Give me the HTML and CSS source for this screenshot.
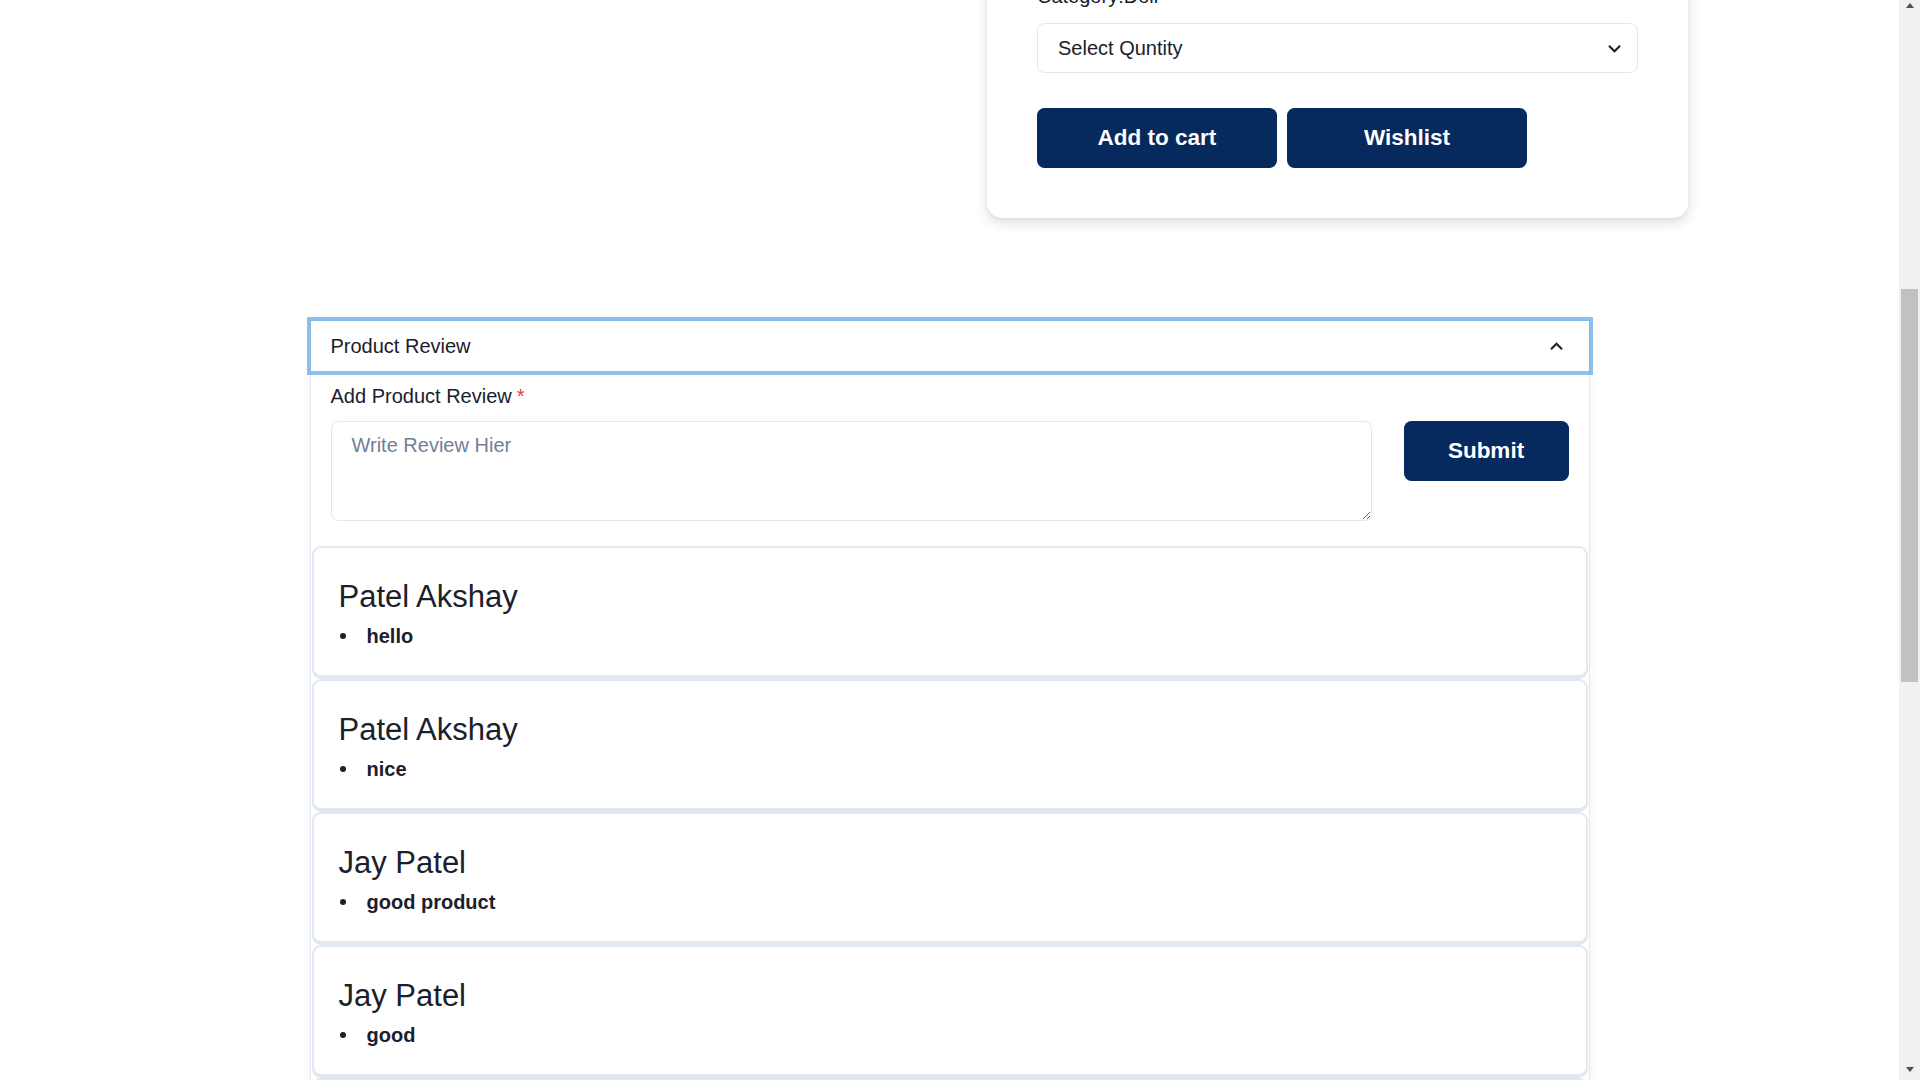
FILE: index.html
```html
<!DOCTYPE html>
<html lang="en">
<head>
<meta charset="utf-8">
<title>Product Review</title>
<link rel="stylesheet" href="styles.css">
</head>
<body>
<div class="screen">
  <main class="page">
    <section class="product">
      <div class="product-media"></div>
      <div class="product-card">
        <p class="category">Category:Doll</p>
        <div class="select">
          <span>Select Quntity</span>
          <svg class="chev" viewBox="0 0 24 24" aria-hidden="true"><path d="M16.59 8.59L12 13.17 7.41 8.59 6 10l6 6 6-6z"/></svg>
        </div>
        <div class="actions">
          <button class="btn">Add to cart</button>
          <button class="btn">Wishlist</button>
        </div>
      </div>
    </section>

    <section class="accordion">
      <div class="acc-item">
        <button class="acc-button">
          <span>Product Review</span>
          <svg class="chev" viewBox="0 0 24 24" aria-hidden="true"><path d="M12 8l-6 6 1.41 1.41L12 10.83l4.59 4.58L18 14z"/></svg>
        </button>
        <div class="acc-panel">
          <label class="label" for="review">Add Product Review<span class="req">*</span></label>
          <div class="review-form">
            <textarea id="review" class="textarea" placeholder="Write Review Hier"></textarea>
            <button class="btn submit">Submit</button>
          </div>
        </div>
        <div class="reviews">
          <div class="review">
            <p class="review-name">Patel Akshay</p>
            <ul class="review-list"><li>hello</li></ul>
          </div>
          <div class="review">
            <p class="review-name">Patel Akshay</p>
            <ul class="review-list"><li>nice</li></ul>
          </div>
          <div class="review">
            <p class="review-name">Jay Patel</p>
            <ul class="review-list"><li>good product</li></ul>
          </div>
          <div class="review">
            <p class="review-name">Jay Patel</p>
            <ul class="review-list"><li>good</li></ul>
          </div>
          <div class="review review-empty"></div>
        </div>
      </div>
    </section>
  </main>
  <aside class="scrollbar" aria-hidden="true">
    <div class="sb-up"><span class="tri-up"></span></div>
    <div class="sb-thumb"></div>
    <div class="sb-fill"></div>
    <div class="sb-down"><span class="tri-down"></span></div>
  </aside>
</div>
</body>
</html>
```

FILE: styles.css
```css
* { box-sizing: border-box; }

html, body {
  margin: 0;
  padding: 0;
  background: #ffffff;
}

body {
  font-family: "Liberation Sans", Arial, sans-serif;
  color: #1a202c;
  overflow: hidden;
}

.screen {
  display: flex;
  height: 1080px;
  overflow: hidden;
}

.page {
  flex: 1;
  min-width: 0;
  overflow: hidden;
}

/* ---------- product section ---------- */
.product {
  width: 1477px;
  margin: -69px auto 0;
  display: grid;
  grid-template-columns: 1fr 701px;
}

.product-card {
  background: #fff;
  border-radius: 15px;
  padding: 50px;
  box-shadow: 0 5px 14px rgba(0, 0, 0, 0.12), 0 2px 5px rgba(0, 0, 0, 0.05);
}

.category {
  margin: 0;
  font-size: 20px;
  line-height: 30px;
}

.select {
  margin-top: 12px;
  height: 50px;
  border: 1px solid #e2e8f0;
  border-radius: 7.5px;
  padding: 0 10px 0 20px;
  display: flex;
  align-items: center;
  justify-content: space-between;
  font-size: 20px;
}

.chev {
  width: 25px;
  height: 25px;
  fill: #1a202c;
  flex: none;
}

.actions {
  margin-top: 35px;
  display: flex;
  gap: 10px;
}

.btn {
  font-family: "Liberation Sans", Arial, sans-serif;
  background: #06295e;
  color: #ffffff;
  border: none;
  border-radius: 7.5px;
  height: 60px;
  width: 240px;
  font-size: 22.5px;
  font-weight: 700;
  padding: 0;
  cursor: pointer;
}

/* ---------- accordion ---------- */
.accordion {
  width: 1280px;
  margin: 102px auto 0;
}

.acc-item {
  border: 1px solid #e2e8f0;
  border-bottom: none;
  box-shadow: 0 0 10px rgba(0, 0, 0, 0.05);
}

.acc-button {
  position: relative;
  z-index: 1;
  display: flex;
  width: 100%;
  align-items: center;
  justify-content: space-between;
  padding: 10px 20px;
  font-family: "Liberation Sans", Arial, sans-serif;
  font-size: 20px;
  line-height: 30px;
  color: #1a202c;
  background: #fff;
  border: none;
  text-align: left;
  box-shadow: 0 0 0 4px rgba(66, 153, 225, 0.6);
}

.acc-panel {
  padding: 10px 20px 25px;
}

.label {
  display: block;
  font-size: 20px;
  line-height: 30px;
  font-weight: 500;
  margin-bottom: 10px;
}

.req {
  color: #e53e3e;
  margin-left: 5px;
}

.review-form {
  display: flex;
  align-items: flex-start;
  gap: 32px;
}

.textarea {
  flex: 1;
  display: block;
  margin: 0;
  height: 100px;
  min-height: 100px;
  border: 1px solid #e2e8f0;
  border-radius: 7.5px;
  padding: 8px 20px 10px;
  font-family: "Liberation Sans", Arial, sans-serif;
  font-size: 20px;
  line-height: 30px;
  color: #1a202c;
  resize: vertical;
  outline: none;
}

.textarea::placeholder {
  color: #718096;
  opacity: 1;
}

.submit {
  width: 165px;
  flex: none;
}

/* ---------- reviews ---------- */
.reviews {
  padding: 0 1px;
}

.review {
  border: 2px solid #e2e8f0;
  border-radius: 9px;
  padding: 26px 25px 24px;
  margin-bottom: 2px;
  background: #fff;
  box-shadow: 0 2px 0 #e2e8f0;
}

.review-empty {
  height: 131px;
}

.review-name {
  margin: 0;
  font-size: 31px;
  line-height: 45px;
  font-weight: 400;
  color: #1a202c;
}

.review-list {
  list-style: none;
  margin: 2px 0 0;
  padding: 0;
}

.review-list li {
  display: flex;
  align-items: center;
  font-size: 20px;
  line-height: 30px;
  font-weight: 700;
  color: #1a202c;
}

.review-list li::before {
  content: "";
  width: 6px;
  height: 6px;
  border-radius: 50%;
  background: #1a202c;
  margin: 0 21px 0 1px;
  flex: none;
}

/* ---------- scrollbar ---------- */
.scrollbar {
  width: 21px;
  flex: none;
  background: #f1f1f1;
  display: flex;
  flex-direction: column;
}

.sb-up {
  height: 21px;
  display: flex;
  justify-content: center;
  padding-top: 3px;
}

.tri-up {
  width: 0;
  height: 0;
  border-left: 4.5px solid transparent;
  border-right: 4.5px solid transparent;
  border-bottom: 5px solid #505050;
}

.sb-thumb {
  margin: 268px 2px 0;
  height: 393px;
  background: #c1c1c1;
}

.sb-fill {
  flex: 1;
}

.sb-down {
  height: 21px;
  display: flex;
  justify-content: center;
  align-items: center;
}

.tri-down {
  width: 0;
  height: 0;
  border-left: 4.5px solid transparent;
  border-right: 4.5px solid transparent;
  border-top: 5px solid #505050;
}
```
